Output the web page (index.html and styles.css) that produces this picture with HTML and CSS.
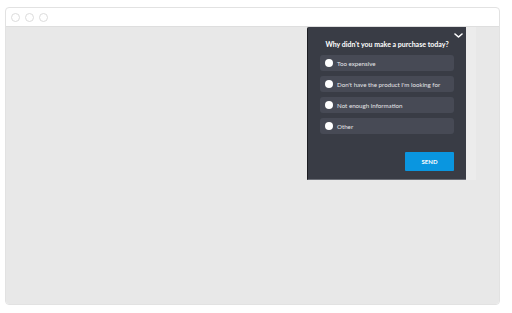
FILE: index.html
```html
<!DOCTYPE html>
<html>
<head>
	<meta charset="utf-8">
	<title>Exit survey</title>
	<link rel="stylesheet" href="styles.css">
</head>
<body>
	<div class="frame">
		<div class="titlebar">
			<span class="dot"></span>
			<span class="dot"></span>
			<span class="dot"></span>
		</div>
		<div class="viewport">
			<div class="survey">
				<div class="close">
					<svg width="9" height="5" viewBox="0 0 9 5"><path d="M1 1 L4.5 4 L8 1" fill="none" stroke="#fff" stroke-width="1.6" stroke-linecap="round" stroke-linejoin="round"/></svg>
				</div>
				<h1 class="question">Why didn't you make a purchase today?</h1>
				<ul class="options">
					<li><span class="radio"></span>Too expensive</li>
					<li><span class="radio"></span>Don't have the product I'm looking for</li>
					<li><span class="radio"></span>Not enough information</li>
					<li><span class="radio"></span>Other</li>
				</ul>
				<div class="actions">
					<button class="send">SEND</button>
				</div>
			</div>
		</div>
	</div>
</body>
</html>
```

FILE: styles.css
```css
html, body {
	margin: 0;
	padding: 0;
	background: #fff;
}

body {
	padding: 7px 12px 8px 5px;
	font-family: Lato, "Open Sans", sans-serif;
}

.frame {
	height: 296px;
	border: 1px solid #e2e2e2;
	border-radius: 4px;
	overflow: hidden;
	display: flex;
	flex-direction: column;
	background: #fff;
}

.titlebar {
	height: 18px;
	border-bottom: 1px solid #dedede;
	display: flex;
	align-items: center;
	gap: 5px;
	padding-left: 5px;
}

.dot {
	width: 7px;
	height: 7px;
	border: 1px solid #dcdcdc;
	border-radius: 50%;
}

.viewport {
	flex: 1;
	background: #e8e8e8;
	display: flex;
	justify-content: flex-end;
	align-items: flex-start;
	padding-right: 33px;
}

.survey {
	position: relative;
	width: 159px;
	height: 153px;
	background: #393c45;
	border-left: 1px solid #1c1d22;
	border-bottom: 1px solid #6b6e76;
	border-top-left-radius: 2px;
	box-shadow: 10px 0 0 #ececec;
	box-sizing: border-box;
	padding: 11px 12px 0 12px;
}

.close {
	position: absolute;
	top: 5px;
	right: 3px;
	line-height: 0;
}

.question {
	margin: 0;
	color: #fff;
	font-size: 7px;
	font-weight: bold;
	text-align: center;
	line-height: 12px;
}

.options {
	list-style: none;
	margin: 5px 0 0 0;
	padding: 0;
}

.options li {
	height: 16px;
	margin-bottom: 5px;
	background: #474a55;
	border-radius: 3px;
	display: flex;
	align-items: center;
	padding-left: 5px;
	color: #e6e6e8;
	font-size: 6.2px;
}

.radio {
	width: 8px;
	height: 8px;
	border-radius: 50%;
	background: #fff;
	margin-right: 4px;
}

.actions {
	display: flex;
	justify-content: flex-end;
	margin-top: 18px;
}

.send {
	width: 49px;
	height: 19px;
	border: 0;
	border-radius: 1px;
	background: #0a96e0;
	color: #fff;
	font-family: Lato, sans-serif;
	font-weight: bold;
	font-size: 6px;
	padding: 0;
}
```
